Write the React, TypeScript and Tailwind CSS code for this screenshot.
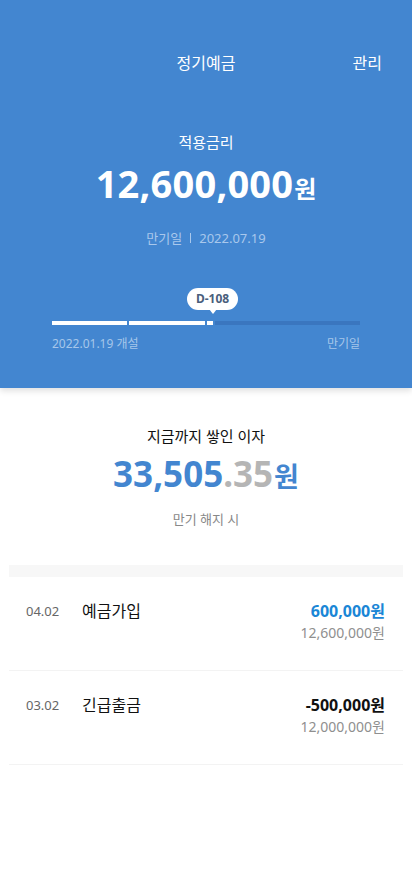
import React from "react";

const font = { fontFamily: '"Noto Sans", "Noto Sans CJK KR", sans-serif' };

function Row({ date, title, amount, balance, blue }: { date: string; title: string; amount: string; balance: string; blue?: boolean }) {
  return (
    <div className="mx-[9px] flex border-b border-[#f3f3f3] pl-[17px] pr-[18px] pt-[23px] pb-[27px]">
      <div className="w-[56px] pt-[1px] text-[13px] leading-[20px] text-[#666]">{date}</div>
      <div className="flex-1 text-[16px] leading-[22px] text-[#111]">{title}</div>
      <div className="flex flex-col items-end">
        <div className={`text-[16px] font-bold leading-[22px] ${blue ? "text-[#1a86d6]" : "text-[#111]"}`}>{amount}</div>
        <div className="mt-[1px] text-[14px] leading-[20px] text-[#8f8f8f]">{balance}</div>
      </div>
    </div>
  );
}

export default function App() {
  return (
    <div className="min-h-[869px] bg-white" style={font}>
      <div className="relative z-10 h-[388px] bg-[#4386d0] shadow-[0_3px_6px_rgba(0,0,0,0.12)]">
        <div className="relative flex h-[131px] items-start justify-center pt-[51px]">
          <div className="text-[16px] leading-[24px] text-white">정기예금</div>
          <div className="absolute right-[30px] top-[51px] text-[16px] leading-[24px] text-white">관리</div>
        </div>
        <div className="flex flex-col items-center">
          <div className="text-[15px] leading-[22px] text-white">적용금리</div>
          <div className="mt-[6px] flex items-baseline text-white">
            <span className="text-[38px] font-bold leading-[48px] tracking-[0.2px]">12,600,000</span>
            <span className="ml-[1px] text-[24px] font-bold">원</span>
          </div>
          <div className="mt-[21px] flex items-center text-[13px] leading-[20px] text-[#a9c8ec]">
            <span>만기일</span>
            <span className="mx-[8px] h-[10px] w-px bg-[#a9c8ec]" />
            <span>2022.07.19</span>
          </div>
        </div>
        <div className="mx-[52px] mt-[40px]">
          <div className="relative h-[33px]">
            <div className="absolute left-[135px] top-0 flex h-[22px] w-[51px] items-center justify-center rounded-full bg-white text-[12px] font-bold text-[#4a5e7c]">
              D-108
            </div>
            <div className="absolute left-[157px] top-[21px] h-0 w-0 border-x-[4px] border-t-[5px] border-x-transparent border-t-white" />
          </div>
          <div className="flex h-[4px] gap-[2px]">
            <div className="w-[75px] bg-white" />
            <div className="w-[76px] bg-white" />
            <div className="w-[6px] bg-white" />
            <div className="flex-1 bg-[#3a76bf]" />
          </div>
          <div className="mt-[10px] flex justify-between text-[12px] leading-[18px] text-[#a6c6ea]">
            <span>2022.01.19 개설</span>
            <span>만기일</span>
          </div>
        </div>
      </div>
      <div className="flex flex-col items-center pt-[37px]">
        <div className="text-[15px] leading-[22px] text-[#111]">지금까지 쌓인 이자</div>
        <div className="mt-[4px] flex items-baseline font-bold">
          <span className="text-[35px] leading-[46px] text-[#4386d0]">33,505</span>
          <span className="text-[35px] leading-[46px] text-[#b5b5b5]">.35</span>
          <span className="ml-[1px] text-[27px] text-[#4386d0]">원</span>
        </div>
        <div className="mt-[11px] text-[13px] leading-[20px] text-[#888]">만기 해지 시</div>
      </div>
      <div className="mx-[9px] mt-[36px] h-[12px] bg-[#f7f7f7]" />
      <Row date="04.02" title="예금가입" amount="600,000원" balance="12,600,000원" blue />
      <Row date="03.02" title="긴급출금" amount="-500,000원" balance="12,000,000원" />
    </div>
  );
}
